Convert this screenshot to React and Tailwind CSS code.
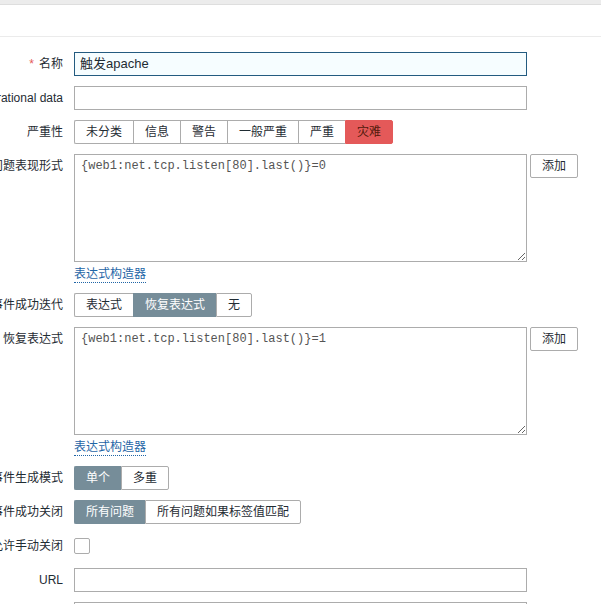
import React from "react";

const font = { fontFamily: '"Liberation Sans", Arial, "Noto Sans CJK SC", sans-serif' };

function Row({ label, required, children }) {
  return (
    <div className="flex items-start">
      <div className="w-[200px] shrink-0 text-right pr-[11px] h-[24px] leading-[24px] whitespace-nowrap text-[#1f2c33]">
        {required && <span className="text-[#e45959] mr-[5px]">*</span>}
        {label}
      </div>
      <div className="flex flex-col items-start">{children}</div>
    </div>
  );
}

function Seg({ items, active, danger }) {
  return (
    <div className="flex h-[24px]">
      {items.map((it, i) => {
        const isActive = i === active;
        const first = i === 0;
        const last = i === items.length - 1;
        let cls =
          "h-[24px] leading-[22px] px-[11px] whitespace-nowrap border-y border-l ";
        if (last) cls += "border-r ";
        if (first) cls += "rounded-l-[2px] ";
        if (last) cls += "rounded-r-[2px] ";
        if (isActive && danger) cls += "bg-[#e45959] border-[#e45959] text-[#52190b] ";
        else if (isActive) cls += "bg-[#768d99] border-[#768d99] text-white ";
        else cls += "bg-white border-[#acacac] text-[#1f2c33] ";
        return (
          <div key={i} className={cls}>
            {it}
          </div>
        );
      })}
    </div>
  );
}

function Input({ value, focused }) {
  return (
    <div
      className={
        "w-[453px] h-[24px] leading-[22px] px-[5px] border text-[13px] " +
        (focused
          ? "border-[#235b80] bg-[#f6fdff] text-[#1f2c33]"
          : "border-[#acacac] bg-white")
      }
    >
      {value}
    </div>
  );
}

function ExprBlock({ value }) {
  return (
    <div className="flex flex-col items-start">
      <div className="flex items-start">
        <textarea
          readOnly
          defaultValue={value}
          className="w-[453px] h-[108px] border border-[#acacac] bg-white px-[6px] py-[3px] text-[12px] leading-[16px] text-[#555] outline-none resize-y"
          style={{ fontFamily: '"Liberation Mono", "Courier New", monospace' }}
        />
        <button className="ml-[3px] w-[48px] h-[24px] border border-[#acacac] rounded-[2px] bg-white text-[#1f2c33] text-[12px] leading-[22px]">
          添加
        </button>
      </div>
      <span className="mt-[4px] leading-[16px] text-[#1f65a6] border-b border-dotted border-[#1f65a6]">
        表达式构造器
      </span>
    </div>
  );
}

export default function App() {
  return (
    <div className="w-[601px] h-[604px] overflow-hidden bg-white text-[12px]" style={font}>
      <div className="h-[5px] bg-[#ececec] border-b border-[#dedede]" />
      <div className="h-[32px] border-b border-[#ebebeb]" />
      <div className="ml-[-126px] pt-[15px] flex flex-col gap-[10px]">
        <Row label="名称" required>
          <Input value="触发apache" focused />
        </Row>
        <Row label="Operational data">
          <Input value="" />
        </Row>
        <Row label="严重性">
          <Seg items={["未分类", "信息", "警告", "一般严重", "严重", "灾难"]} active={5} danger />
        </Row>
        <Row label="问题表现形式">
          <ExprBlock value="{web1:net.tcp.listen[80].last()}=0" />
        </Row>
        <Row label="事件成功迭代">
          <Seg items={["表达式", "恢复表达式", "无"]} active={1} />
        </Row>
        <Row label="恢复表达式">
          <ExprBlock value="{web1:net.tcp.listen[80].last()}=1" />
        </Row>
        <Row label="事件生成模式">
          <Seg items={["单个", "多重"]} active={0} />
        </Row>
        <Row label="事件成功关闭">
          <Seg items={["所有问题", "所有问题如果标签值匹配"]} active={0} />
        </Row>
        <Row label="允许手动关闭">
          <div className="h-[24px] flex items-center">
            <div className="w-[16px] h-[16px] border border-[#acacac] rounded-[2px] bg-white" />
          </div>
        </Row>
        <Row label="URL">
          <Input value="" />
        </Row>
        <Row label="">
          <Input value="" />
        </Row>
      </div>
    </div>
  );
}
